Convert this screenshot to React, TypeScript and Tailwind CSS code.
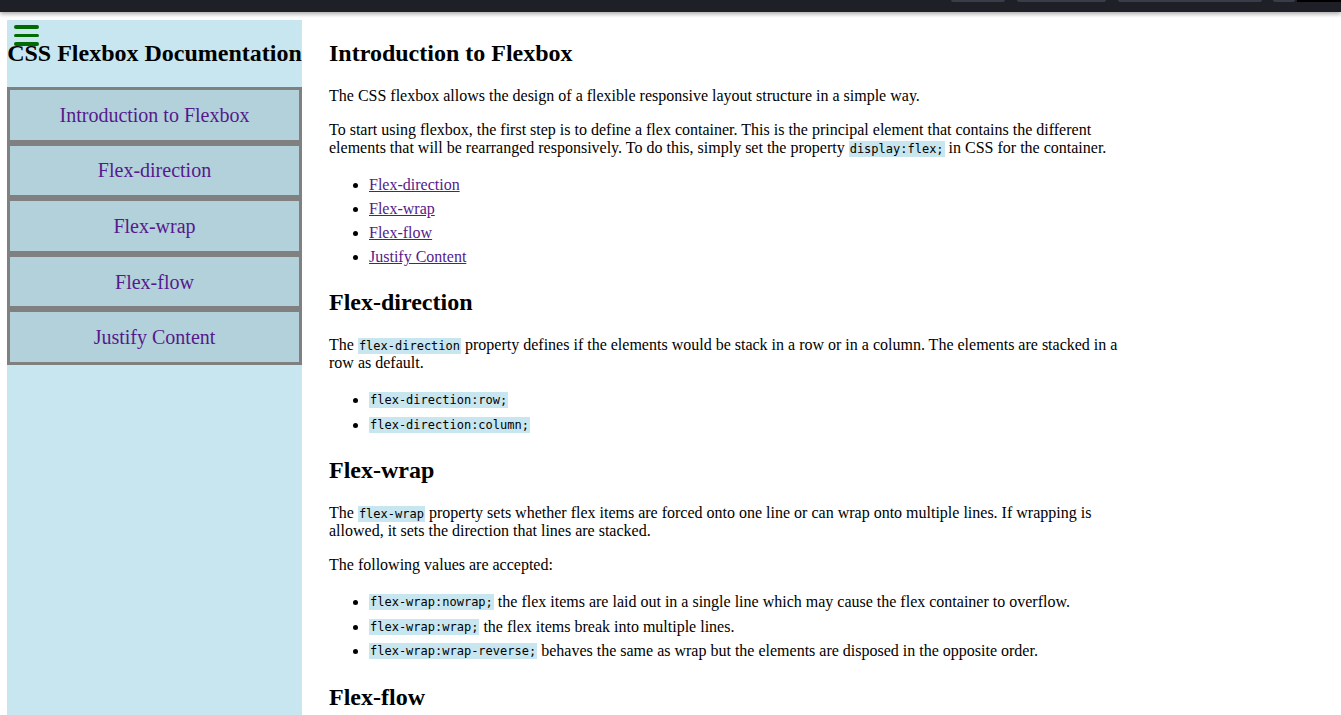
import React from 'react';

const navItems = ['Introduction to Flexbox', 'Flex-direction', 'Flex-wrap', 'Flex-flow', 'Justify Content'];

function Code({ children, raised }: { children: React.ReactNode; raised?: boolean }) {
  return (
    <code
      className={
        raised
          ? "bg-[#c8e6ef] px-[1px] py-[1px] align-[1px] font-['DejaVu_Sans_Mono',monospace] text-[12px] leading-none"
          : "bg-[#c8e6ef] px-[1px] py-[1px] font-['DejaVu_Sans_Mono',monospace] text-[12px] leading-none"
      }
    >
      {children}
    </code>
  );
}

function Heading({ children }: { children: React.ReactNode }) {
  return <h2 className="my-5 text-[24px] font-bold leading-[normal]">{children}</h2>;
}

export default function App() {
  return (
    <div className="min-h-screen bg-white font-['Liberation_Serif','Times_New_Roman',serif] text-[16px] leading-[normal] text-black">
      {/* top strip */}
      <div className="flex h-3 items-start justify-end bg-[#1f1f28] shadow-[0_2px_4px_rgba(0,0,0,0.35)]">
        <div className="h-[2px] w-[54px] rounded-b bg-[#3b3c48]" />
        <div className="ml-3 h-[2px] w-[89px] rounded-b bg-[#3b3c48]" />
        <div className="ml-3 h-[2px] w-[144px] rounded-b bg-[#3b3c48]" />
        <div className="ml-[11px] h-[2px] w-[22px] rounded-b bg-[#3b3c48]" />
        <div className="ml-[2px] h-[2px] w-[44px] bg-black" />
      </div>

      <div className="flex items-stretch pl-[7px] pt-2">
        <aside className="relative w-[295px] shrink-0 bg-[#c8e6ef]">
          <div className="absolute left-[7px] top-[5px] flex flex-col gap-[5px]">
            <span className="block h-[3.5px] w-[25px] rounded-full bg-[#006b00]" />
            <span className="block h-[3.5px] w-[25px] rounded-full bg-[#006b00]" />
            <span className="block h-[3.5px] w-[25px] rounded-full bg-[#006b00]" />
          </div>
          <h2 className="my-5 whitespace-nowrap text-center text-[24px] font-bold leading-[normal]">
            CSS Flexbox Documentation
          </h2>
          <nav className="flex flex-col">
            {navItems.map((item) => (
              <a
                key={item}
                href="#"
                className="flex h-[55.6px] items-center justify-center border-[3px] border-[#808080] bg-[#b3d1da] pt-[1px] text-[20px] text-[#551a8b]"
              >
                {item}
              </a>
            ))}
          </nav>
        </aside>

        <main className="ml-[27px] w-[800px]">
          <Heading>Introduction to Flexbox</Heading>
          <p className="my-4">The CSS flexbox allows the design of a flexible responsive layout structure in a simple way.</p>
          <p className="my-4">
            To start using flexbox, the first step is to define a flex container. This is the principal element that contains
            the different elements that will be rearranged responsively. To do this, simply set the property{' '}
            <Code>display:flex;</Code> in CSS for the container.
          </p>
          <ul className="my-4 list-disc pl-10 leading-6">
            {navItems.slice(1).map((item) => (
              <li key={item}>
                <a href="#" className="text-[#551a8b] underline">
                  {item}
                </a>
              </li>
            ))}
          </ul>

          <Heading>Flex-direction</Heading>
          <p className="my-4">
            The <Code>flex-direction</Code> property defines if the elements would be stack in a row or in a column. The
            elements are stacked in a row as default.
          </p>
          <ul className="my-4 list-disc pl-10 leading-[24.5px]">
            <li>
              <Code raised>flex-direction:row;</Code>
            </li>
            <li>
              <Code raised>flex-direction:column;</Code>
            </li>
          </ul>

          <Heading>Flex-wrap</Heading>
          <p className="my-4">
            The <Code>flex-wrap</Code> property sets whether flex items are forced onto one line or can wrap onto multiple
            lines. If wrapping is allowed, it sets the direction that lines are stacked.
          </p>
          <p className="my-4">The following values are accepted:</p>
          <ul className="my-4 list-disc pl-10 leading-[24.5px]">
            <li>
              <Code raised>flex-wrap:nowrap;</Code> the flex items are laid out in a single line which may cause the flex
              container to overflow.
            </li>
            <li>
              <Code raised>flex-wrap:wrap;</Code> the flex items break into multiple lines.
            </li>
            <li>
              <Code raised>flex-wrap:wrap-reverse;</Code> behaves the same as wrap but the elements are disposed in the
              opposite order.
            </li>
          </ul>

          <Heading>Flex-flow</Heading>
          <p className="my-4">
            The <Code>flex-flow</Code> property is a shorthand for setting both the <Code>flex-direction</Code> and{' '}
            <Code>flex-wrap</Code> properties.
          </p>
        </main>
      </div>
    </div>
  );
}
